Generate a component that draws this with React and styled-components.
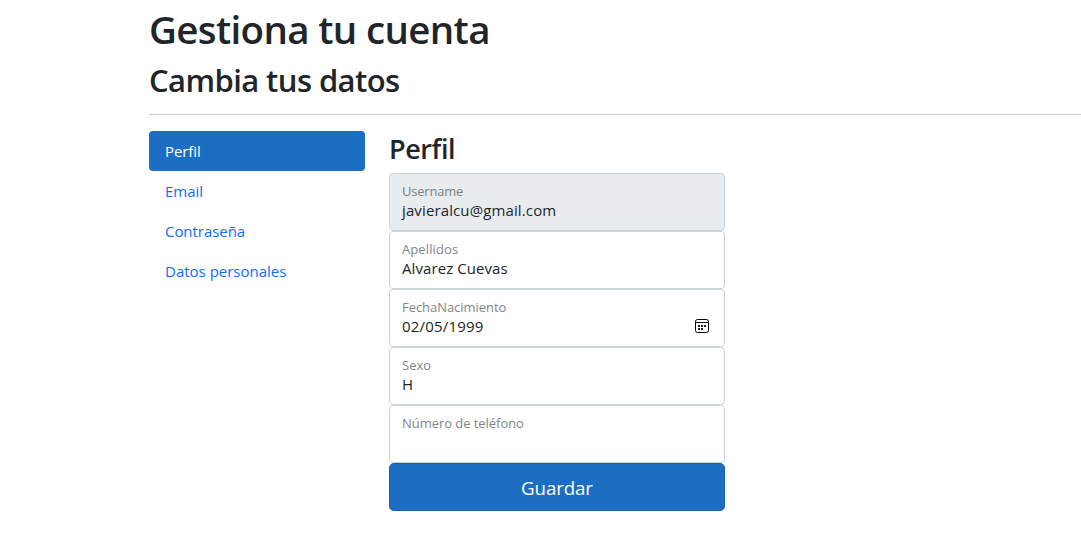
import React from "react";
import styled, { createGlobalStyle } from "styled-components";

const GlobalStyle = createGlobalStyle`
  *, *::before, *::after { box-sizing: border-box; }
  body {
    margin: 0;
    background: #fff;
    color: #212529;
    font: 400 16px/1.5 "Segoe UI", "Open Sans", "Noto Sans", sans-serif;
  }
`;

const Page = styled.main`
  padding: 4px 0 0 149px;
`;

const Text = styled.span`
  letter-spacing: ${(p) => p.$ls || 0}px;
  white-space: nowrap;
`;

const Title = styled.h1`
  margin: 0 0 8px;
  padding-top: 3px;
  font-size: 38.5px;
  font-weight: 560;
  line-height: 45px;
`;

const Subtitle = styled.h2`
  margin: 0 0 16px;
  padding-top: 2px;
  font-size: 31px;
  font-weight: 560;
  line-height: 36px;
`;

const Rule = styled.hr`
  height: 1px;
  margin: 0 0 16px;
  border: 0;
  background: #c8c9ca;
`;

const Columns = styled.div`
  display: grid;
  grid-template-columns: 216px 336px;
  column-gap: 24px;
  align-items: start;
`;

const Nav = styled.nav`
  display: flex;
  flex-direction: column;
`;

const NavLink = styled.a`
  height: 40px;
  padding: 8px 16px;
  border-radius: 4px;
  font-size: 15px;
  line-height: 24px;
  text-decoration: none;
  color: ${(p) => (p.$active ? "#fff" : "#0d6efd")};
  background: ${(p) => (p.$active ? "#1b6ec2" : "transparent")};
`;

const Form = styled.form`
  display: flex;
  flex-direction: column;
`;

const FormTitle = styled.h3`
  margin: 0 0 8px;
  padding-top: 2px;
  font-size: 27px;
  font-weight: 560;
  line-height: 32px;
`;

const Field = styled.div`
  display: grid;
  grid-template-columns: 1fr auto;
  grid-template-rows: 18px 20px;
  height: 58px;
  padding: 8px 14px 0 12px;
  border: 1px solid #ced4da;
  border-radius: 4px;
  background: ${(p) => (p.$disabled ? "#e9ecef" : "#fff")};
`;

const Label = styled.label`
  grid-column: 1 / -1;
  font-size: 13px;
  line-height: 18px;
  color: ${(p) => (p.$disabled ? "#7d8082" : "#848688")};
`;

const Value = styled.div`
  font-size: 15px;
  line-height: 20px;
`;

const Calendar = styled.svg`
  display: block;
  width: 16px;
  height: 16px;
  margin-top: 2px;
`;

const Submit = styled.button`
  height: 48px;
  padding: 2px 0 0;
  border: 1px solid #1861ac;
  border-radius: 4.8px;
  background: #1b6ec2;
  color: #fff;
  font-family: inherit;
  font-size: 18.7px;
  line-height: 30px;
`;

const links = [
  { text: "Perfil", active: true, ls: -0.1 },
  { text: "Email" },
  { text: "Contraseña", ls: -0.05 },
  { text: "Datos personales" },
];

const fields = [
  { label: "Username", value: "javieralcu@gmail.com", disabled: true, labelLs: -0.2, ls: 0.12 },
  { label: "Apellidos", value: "Alvarez Cuevas", labelLs: 0.1, ls: 0.08 },
  { label: "FechaNacimiento", value: "02/05/1999", date: true, labelLs: -0.05, ls: 0.2 },
  { label: "Sexo", value: "H" },
  { label: "Número de teléfono", value: "", labelLs: -0.05 },
];

function CalendarIcon() {
  return (
    <Calendar viewBox="0 0 16 16" fill="none" aria-hidden="true">
      <rect x="1.5" y="1.5" width="13" height="13" rx="2" stroke="#000" />
      <path d="M1.5 4.5h13" stroke="#000" />
      <path d="M7 7h2v2H7zM10 7h2v2h-2zM4 7h2v2H4zM4 10h2v2H4zM7 10h2v2H7z" fill="#222" />
    </Calendar>
  );
}

export default function App() {
  return (
    <>
      <GlobalStyle />
      <Page>
        <Title><Text $ls={-0.65}>Gestiona tu cuenta</Text></Title>
        <Subtitle><Text $ls={-0.58}>Cambia tus datos</Text></Subtitle>
        <Rule />
        <Columns>
          <Nav>
            {links.map((l) => (
              <NavLink key={l.text} $active={l.active}><Text $ls={l.ls}>{l.text}</Text></NavLink>
            ))}
          </Nav>
          <Form>
            <FormTitle><Text $ls={-0.4}>Perfil</Text></FormTitle>
            {fields.map((f) => (
              <Field key={f.label} $disabled={f.disabled}>
                <Label $disabled={f.disabled}><Text $ls={f.labelLs}>{f.label}</Text></Label>
                <Value><Text $ls={f.ls}>{f.value}</Text></Value>
                {f.date && <CalendarIcon />}
              </Field>
            ))}
            <Submit type="button"><Text $ls={-0.1}>Guardar</Text></Submit>
          </Form>
        </Columns>
      </Page>
    </>
  );
}
